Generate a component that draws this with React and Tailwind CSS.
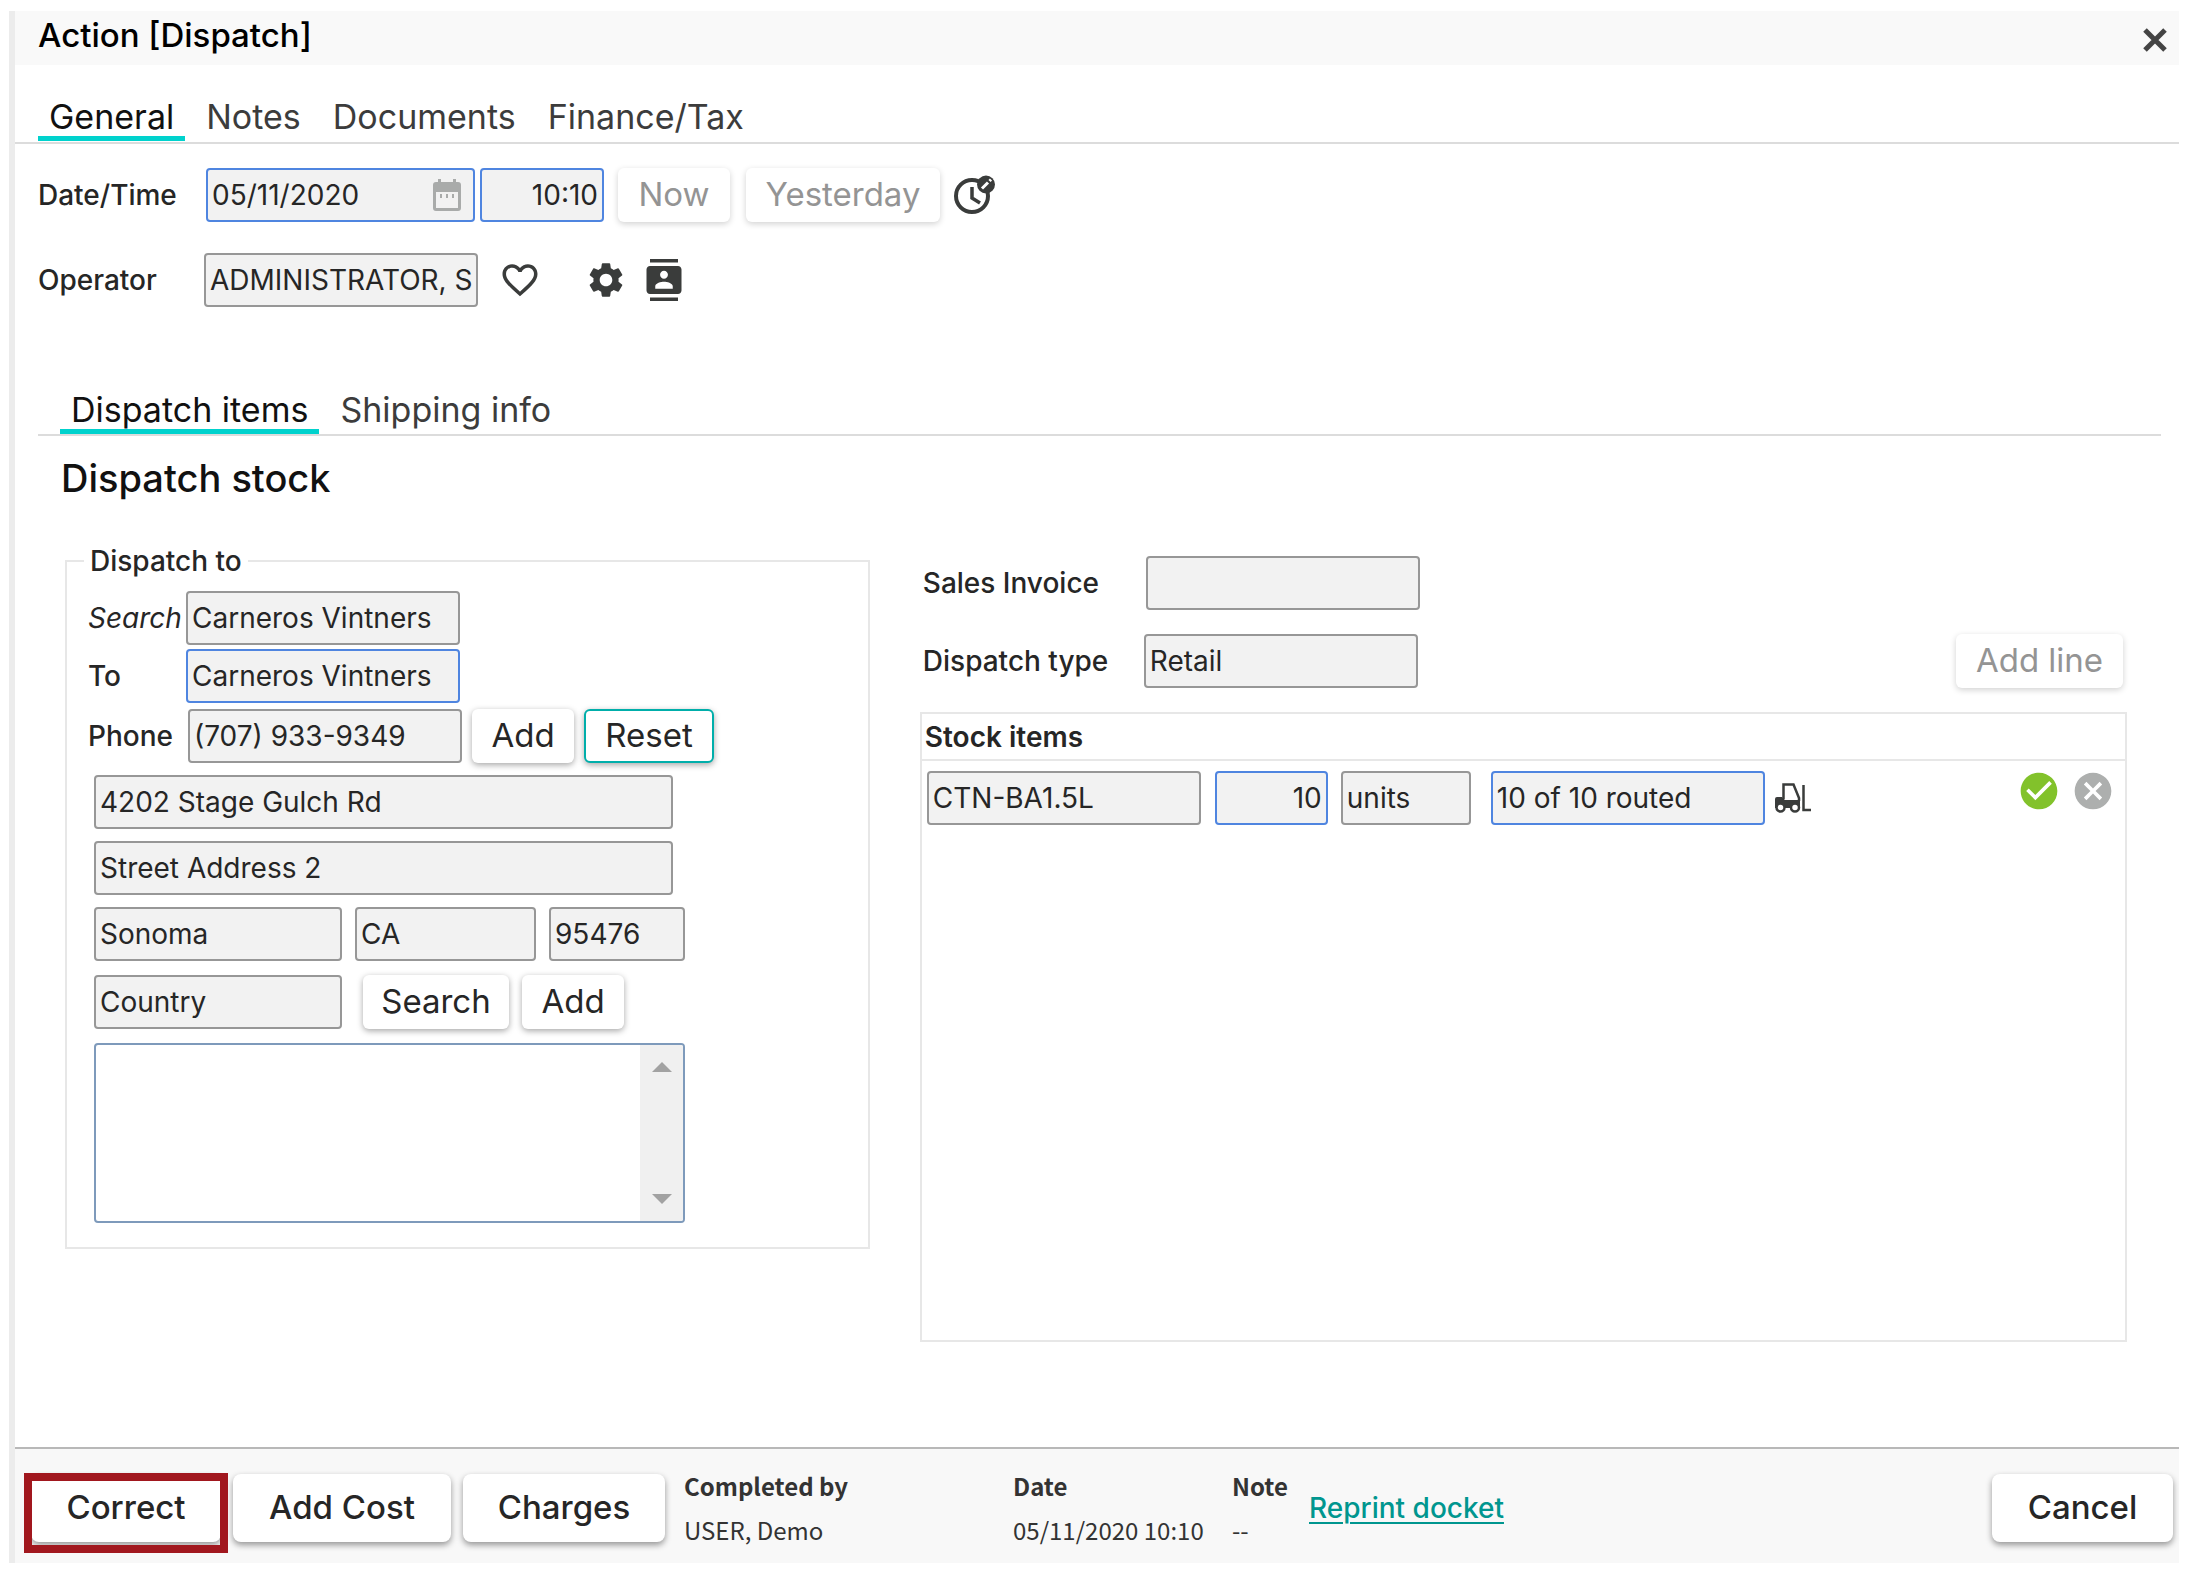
import React from 'react';
import { MdCancel, MdCheckCircle, MdContacts, MdFavoriteBorder, MdSettings } from 'react-icons/md';

const fieldBase = 'h-[54px] min-w-0 shrink-0 rounded border-2 bg-[#f2f2f2] px-1 text-[28px] text-[#262626]';

const Field = ({ className = '', active = false, ...props }) => (
  <input
    type="text"
    className={`${fieldBase} ${active ? 'border-[#4f85e0]' : 'border-[#979797]'} ${className}`}
    {...props}
  />
);

const Button = ({ className = '', children, ...props }) => (
  <button
    type="button"
    className={`h-[54px] shrink-0 rounded-md bg-white text-[33px] text-[#262626] shadow-[0_2px_6px_rgba(0,0,0,0.35)] disabled:text-[#949494] disabled:shadow-[0_2px_6px_rgba(0,0,0,0.18)] ${className}`}
    {...props}
  >
    {children}
  </button>
);

const FooterButton = ({ className = '', children }) => (
  <button
    type="button"
    className={`h-[68px] shrink-0 rounded-lg bg-white text-[33px] font-medium text-[#262626] shadow-[0_3px_6px_rgba(0,0,0,0.4)] ${className}`}
  >
    {children}
  </button>
);

const Tabs = ({ label, items, className }) => (
  <nav aria-label={label} className={`flex gap-2.5 border-b-2 border-[#dcdcdc] ${className}`}>
    {items.map((item, i) => (
      <a
        key={item}
        href="#"
        className={
          i === 0
            ? 'border-b-5 border-[#00d2cd] px-[11px] text-[34px] leading-[39px] text-[#111111]'
            : 'border-b-5 border-transparent px-[11px] text-[34px] leading-[39px] text-[#3c3c3c]'
        }
      >
        {item}
      </a>
    ))}
  </nav>
);

const CloseIcon = () => (
  <svg viewBox="0 0 24 24" className="h-6 w-6" stroke="#444444" strokeWidth="5">
    <path d="M2 2l20 20M22 2L2 22" />
  </svg>
);

const CalendarIcon = () => (
  <svg viewBox="0 0 28 32" className="h-8 w-7 shrink-0" fill="#a9abaa">
    <path d="M3 3h2V0h3v3h12V0h3v3h2a3 3 0 0 1 3 3v23a3 3 0 0 1-3 3H3a3 3 0 0 1-3-3V6a3 3 0 0 1 3-3zm0 10v16h22V13z" fillRule="evenodd" />
    <path d="M7 15h2v4H7zM13 15h2v4h-2zM19 15h2v4h-2z" />
  </svg>
);

const ClockEditIcon = () => (
  <svg viewBox="0 0 42 40" className="h-10 w-[42px]" fill="none">
    <circle cx="18" cy="21" r="16" stroke="#3a3c3b" strokeWidth="4" />
    <path d="M18 12v11l8 5" stroke="#3a3c3b" strokeWidth="3.500" />
    <circle cx="32" cy="9.500" r="9" fill="#3a3c3b" />
    <path d="M28 13.500l6-6" stroke="#ffffff" strokeWidth="3" />
    <path d="M35.500 6l1.500-1.500" stroke="#ffffff" strokeWidth="3" />
  </svg>
);

const ForkliftIcon = () => (
  <svg viewBox="0 0 36 30" className="h-[30px] w-9" fill="none">
    <path d="M8.500 16V1.500h10L24 15v3" stroke="#3a3c3b" strokeWidth="2.500" />
    <path d="M0 16q0-2 2-2h5l3 3h15v8H0z" fill="#3a3c3b" />
    <circle cx="5.500" cy="24.500" r="4" fill="#ffffff" stroke="#3a3c3b" strokeWidth="2.500" />
    <circle cx="20" cy="24.500" r="4" fill="#ffffff" stroke="#3a3c3b" strokeWidth="2.500" />
    <path d="M28.500 2v25H36" stroke="#3a3c3b" strokeWidth="2.500" />
  </svg>
);

const DispatchTo = () => (
  <fieldset className="min-w-0 self-start border-2 border-[#e7e7e7] px-[21px] pb-6">
    <legend className="-ml-1 px-1.5 text-[28px] leading-7 font-medium">Dispatch to</legend>
    <div className="flex items-center pt-4">
      <label htmlFor="search" className="w-[98px] text-[28px] italic">Search</label>
      <Field id="search" defaultValue="Carneros Vintners" className="w-[274px]" />
    </div>
    <div className="mt-1 flex items-center">
      <label htmlFor="to" className="w-[98px] text-[28px] font-medium">To</label>
      <Field id="to" active defaultValue="Carneros Vintners" className="w-[274px]" />
    </div>
    <div className="mt-1.5 flex items-center gap-2.5">
      <div className="flex items-center">
        <label htmlFor="phone" className="w-[100px] text-[28px] font-medium">Phone</label>
        <Field id="phone" defaultValue="(707) 933-9349" className="w-[274px]" />
      </div>
      <Button className="w-[102px]">Add</Button>
      <Button className="w-[130px] border-2 border-[#00aeaa]">Reset</Button>
    </div>
    <div className="ml-1.5 flex flex-col gap-3 pt-3">
      <Field aria-label="Street address" defaultValue="4202 Stage Gulch Rd" className="w-[579px]" />
      <Field aria-label="Street address 2" defaultValue="Street Address 2" className="w-[579px]" />
      <div className="flex gap-[13px]">
        <Field aria-label="City" defaultValue="Sonoma" className="w-[248px]" />
        <Field aria-label="State" defaultValue="CA" className="w-[181px]" />
        <Field aria-label="Zip" defaultValue="95476" className="w-[136px]" />
      </div>
      <div className="mt-0.5 flex gap-[13px]">
        <Field aria-label="Country" defaultValue="Country" className="mr-2 w-[248px]" />
        <Button className="w-[146px]">Search</Button>
        <Button className="w-[102px]">Add</Button>
      </div>
      <div className="mt-0.5 flex h-[180px] w-[591px] overflow-hidden rounded border-2 border-[#7e9abb]">
        <textarea aria-label="Notes" className="min-w-0 flex-1 resize-none text-[28px]" />
        <div className="flex w-[43px] flex-col items-center justify-between bg-[#f0f0f0] py-[17px]">
          <svg viewBox="0 0 20 10" className="h-2.5 w-5" fill="#a2a2a2"><path d="M10 0l10 10H0z" /></svg>
          <svg viewBox="0 0 20 10" className="h-2.5 w-5" fill="#a2a2a2"><path d="M0 0h20L10 10z" /></svg>
        </div>
      </div>
    </div>
  </fieldset>
);

const StockItems = () => (
  <div className="flex min-w-0 flex-col gap-6 pt-[9px]">
    <div className="flex items-center">
      <label htmlFor="invoice" className="w-[226px] pl-[3px] text-[28px] font-medium">Sales Invoice</label>
      <Field id="invoice" className="w-[274px]" />
    </div>
    <div className="flex items-center">
      <label htmlFor="type" className="w-[224px] pl-[3px] text-[28px] font-medium">Dispatch type</label>
      <Field id="type" defaultValue="Retail" className="w-[274px]" />
      <Button disabled className="mr-1 ml-auto w-[167px]">Add line</Button>
    </div>
    <div className="min-h-[630px] border-2 border-[#e7e7e7]">
      <table className="w-full">
        <thead>
          <tr className="border-b-2 border-[#e7e7e7]">
            <th colSpan={6} className="h-[46px] pl-[3px] text-left text-[28px] leading-7 font-semibold text-[#262626]">
              Stock items
            </th>
          </tr>
        </thead>
        <tbody>
          <tr>
            <td className="pt-2.5 pl-[5px]">
              <Field aria-label="Item" defaultValue="CTN-BA1.5L" className="block w-[274px]" />
            </td>
            <td className="pt-2.5 pl-3.5">
              <Field aria-label="Quantity" active defaultValue="10" className="block w-[113px] text-right" />
            </td>
            <td className="pt-2.5 pl-[13px]">
              <Field aria-label="Unit" defaultValue="units" className="block w-[130px]" />
            </td>
            <td className="pt-2.5 pl-5">
              <Field aria-label="Routing" active defaultValue="10 of 10 routed" className="block w-[274px]" />
            </td>
            <td className="pt-2.5 pl-2.5">
              <button type="button" aria-label="Route stock" className="block">
                <ForkliftIcon />
              </button>
            </td>
            <td className="w-full pt-2 pr-2.5 align-top">
              <div className="flex justify-end gap-2.5">
                <button type="button" aria-label="Confirm line"><MdCheckCircle className="h-11 w-11 text-[#82c22b]" /></button>
                <button type="button" aria-label="Remove line"><MdCancel className="h-11 w-11 text-[#adafae]" /></button>
              </div>
            </td>
          </tr>
        </tbody>
      </table>
    </div>
  </div>
);

const Footer = () => (
  <footer className="flex items-center border-t-2 border-[#b8b8b8] bg-[#f8f8f8] pt-[15px] pr-1.5 pb-[11px] pl-4">
    <div className="flex gap-3">
      <div className="relative">
        <FooterButton className="w-[190px]">Correct</FooterButton>
        <span className="pointer-events-none absolute -top-px -right-[7px] -bottom-[11px] -left-[7px] border-8 border-[#a1171e]" />
      </div>
      <FooterButton className="w-[218px]">Add Cost</FooterButton>
      <FooterButton className="w-[202px]">Charges</FooterButton>
    </div>
    <dl className="ml-[19px] flex font-['Noto_Sans_CJK_SC','Noto_Sans',sans-serif] text-2xl leading-11 text-[#333333]">
      <div className="w-[329px]">
        <dt className="font-bold">Completed by</dt>
        <dd>USER, Demo</dd>
      </div>
      <div className="w-[219px]">
        <dt className="font-bold">Date</dt>
        <dd>05/11/2020 10:10</dd>
      </div>
      <div className="w-[77px]">
        <dt className="font-bold">Note</dt>
        <dd>--</dd>
      </div>
    </dl>
    <a href="#" className="text-[28px] font-medium text-[#00968f] underline decoration-2 underline-offset-4">
      Reprint docket
    </a>
    <FooterButton className="ml-auto w-[181px]">Cancel</FooterButton>
  </footer>
);

const App = () => {
  return (
    <div className="flex min-h-screen bg-white pt-[11px] pr-2.5 pb-[13px] pl-[9px] font-['Inter',sans-serif] text-[#262626]">
      <div className="flex min-w-0 flex-1 flex-col border-l-6 border-[#ececec]">
        <header className="flex h-[54px] items-center justify-between bg-[#f9f9f9] pr-3 pl-[23px]">
          <h1 className="pb-1.5 text-[33px] leading-9 font-medium text-black">Action [Dispatch]</h1>
          <button type="button" aria-label="Close" className="mt-1">
            <CloseIcon />
          </button>
        </header>

        <Tabs label="Action" items={['General', 'Notes', 'Documents', 'Finance/Tax']} className="pt-8 pb-px pl-[23px]" />

        <main className="flex-1 pr-[18px] pb-[104px] pl-[23px]">
          <div className="flex items-center pt-6">
            <label htmlFor="date" className="w-[168px] text-[28px] font-medium">Date/Time</label>
            <div className="flex h-[54px] w-[269px] items-center rounded border-2 border-[#4f85e0] bg-[#f2f2f2] pr-3 pl-1">
              <input id="date" type="text" defaultValue="05/11/2020" className="min-w-0 flex-1 text-[28px]" />
              <CalendarIcon />
            </div>
            <Field aria-label="Time" active defaultValue="10:10" className="ml-[5px] w-[124px] text-right" />
            <Button disabled className="ml-3.5 w-[112px]">Now</Button>
            <Button disabled className="ml-4 w-[194px]">Yesterday</Button>
            <button type="button" aria-label="Edit time" className="ml-3.5">
              <ClockEditIcon />
            </button>
          </div>
          <div className="flex items-center pt-[31px]">
            <label htmlFor="operator" className="w-[166px] text-[28px] font-medium">Operator</label>
            <Field id="operator" defaultValue="ADMINISTRATOR, SYSTEM" className="w-[274px]" />
            <button type="button" aria-label="Favorite" className="ml-[21px]"><MdFavoriteBorder className="h-[42px] w-[42px] text-[#3a3c3b]" /></button>
            <button type="button" aria-label="Settings" className="ml-11"><MdSettings className="h-[42px] w-[42px] text-[#3a3c3b]" /></button>
            <button type="button" aria-label="Contacts" className="ml-4"><MdContacts className="h-[42px] w-[42px] text-[#3a3c3b]" /></button>
          </div>

          <Tabs label="Dispatch" items={['Dispatch items', 'Shipping info']} className="mt-[83px] pl-[22px]" />

          <section className="pr-[34px] pl-[27px]">
            <h2 className="-ml-1 pt-[22px] text-[38px] leading-10 font-medium text-[#111111]">Dispatch stock</h2>
            <div className="grid grid-cols-[2fr_3fr] gap-[50px] pt-[49px]">
              <DispatchTo />
              <StockItems />
            </div>
          </section>
        </main>

        <Footer />
      </div>
    </div>
  );
};

export default App;
